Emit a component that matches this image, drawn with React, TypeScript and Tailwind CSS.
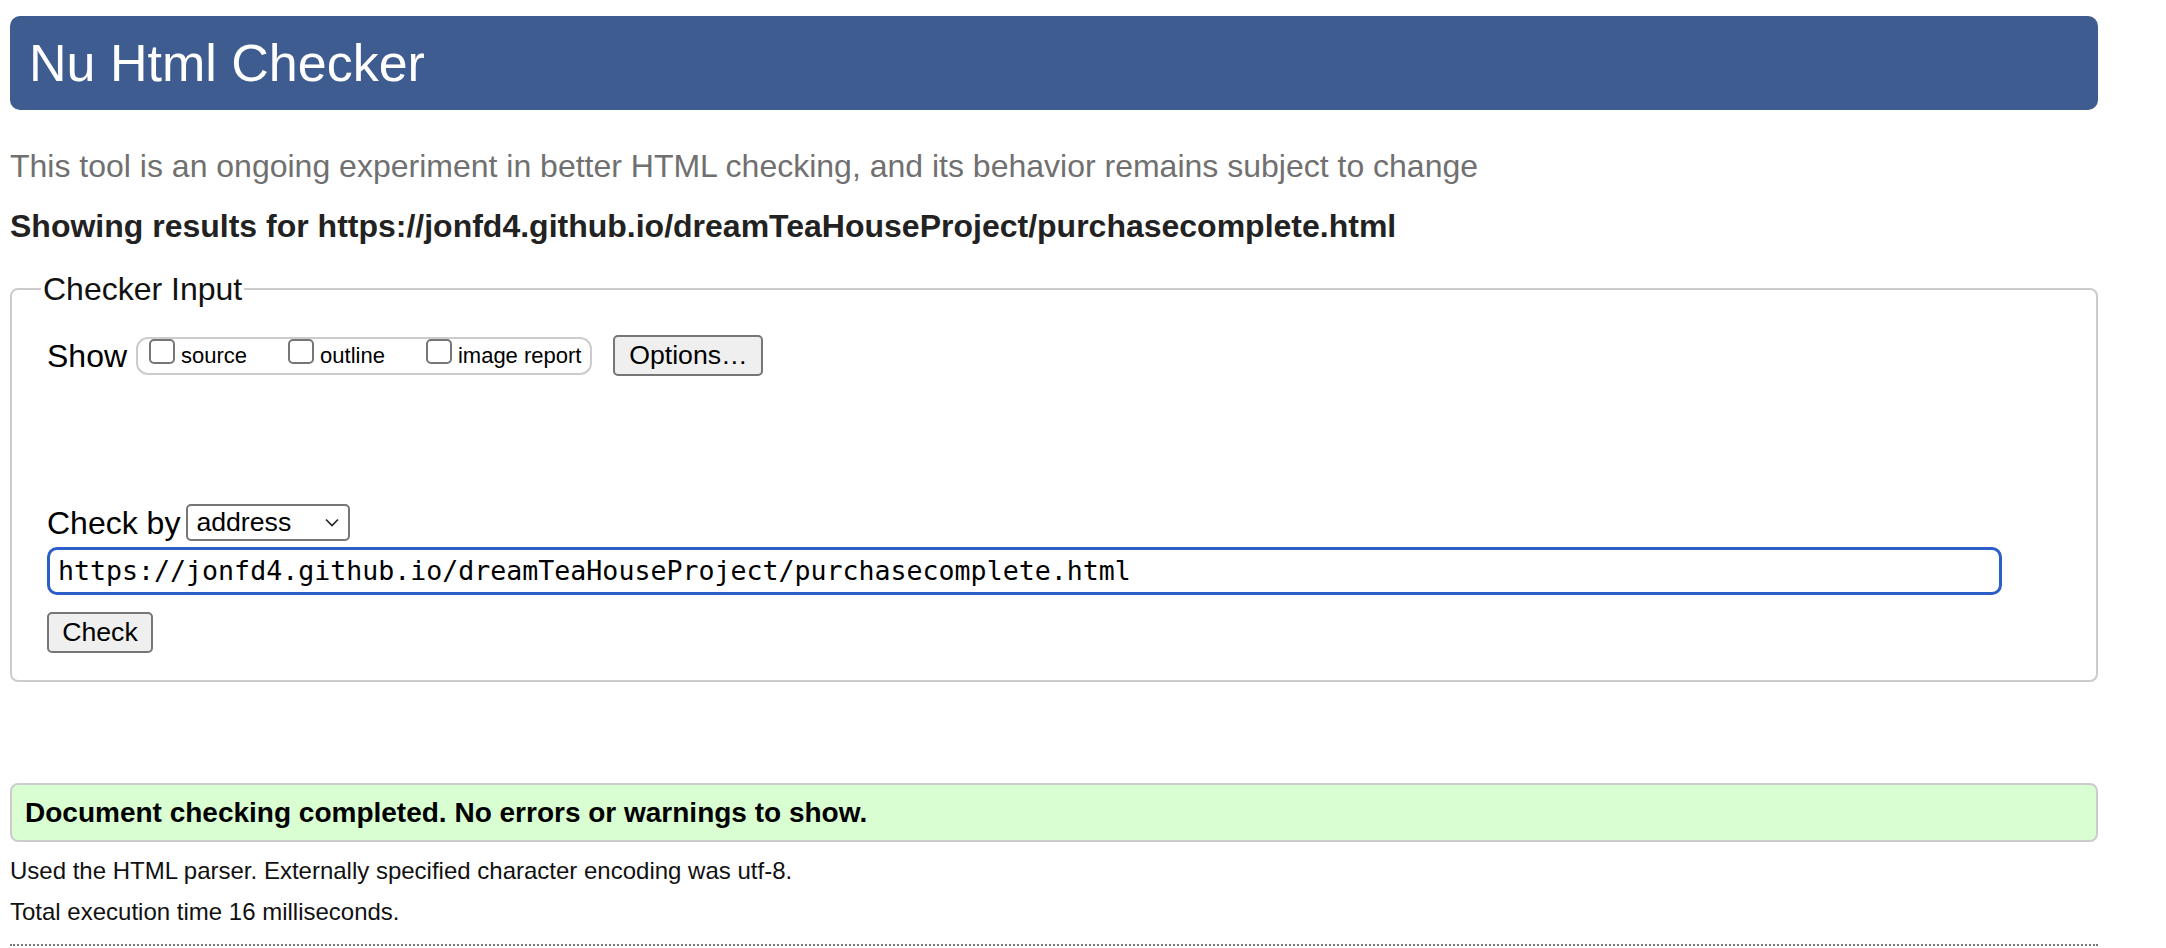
import React from "react";

const sans = "font-['Liberation_Sans',Arial,sans-serif]";

const Checkbox = ({ label }: { label: string }) => (
  <label className="flex items-center">
    <input
      type="checkbox"
      className="appearance-none w-[26px] h-[25px] mb-[9px] border-2 border-[#767676] rounded-[5px] bg-white"
    />
    <span className="ml-[6px] text-[22px] leading-[28px] text-black">{label}</span>
  </label>
);

const Button = ({ children, className }: { children: React.ReactNode; className?: string }) => (
  <button
    className={
      "h-[41px] border-2 border-[#767676] rounded-[5px] bg-[#efefef] text-[26.67px] leading-none text-black " +
      (className ?? "")
    }
  >
    {children}
  </button>
);

export default function App() {
  return (
    <div className={`${sans} min-h-screen bg-white text-black`}>
      <div className="ml-[10px] w-[2088px]">
        {/* title bar */}
        <div className="mt-[16px] h-[94px] rounded-[10px] bg-[#3e5c8f] flex items-center pl-[19px]">
          <h1 className="text-[52px] leading-none text-white">Nu Html Checker</h1>
        </div>

        <p className="mt-[36px] text-[32px] leading-[40px] text-[#707070]">
          This tool is an ongoing experiment in better HTML checking, and its behavior remains subject to change
        </p>
        <p className="mt-[20px] text-[32px] leading-[40px] font-bold text-[#222]">
          Showing results for https://jonfd4.github.io/dreamTeaHouseProject/purchasecomplete.html
        </p>

        {/* input form */}
        <fieldset className="mt-[25px] border-2 border-[#cccccc] rounded-[8px] pl-[29px] pb-[27px]">
          <legend className="px-[2px] text-[32px] leading-[36px] text-[#111]">Checker Input</legend>
          <div className="pl-[6px]">
            <div className="mt-[28px] flex items-center h-[41px]">
              <span className="text-[32px] leading-[40px]">Show</span>
              <div className="ml-[9px] h-[38px] flex items-center gap-[41px] border-2 border-[#cccccc] rounded-[12px] pl-[11px] pr-[9px]">
                <Checkbox label="source" />
                <Checkbox label="outline" />
                <Checkbox label="image report" />
              </div>
              <Button className="ml-[21px] w-[150px]">Options…</Button>
            </div>

            <div className="mt-[128px] flex items-center h-[37px]">
              <span className="text-[32px] leading-[40px]">Check by</span>
              <div className="ml-[6px] w-[164px] h-[37px] border-2 border-[#767676] rounded-[5px] bg-white flex items-center justify-between pl-[8px] pr-[9px]">
                <span className="text-[26.67px] leading-none">address</span>
                <svg width="14" height="9" viewBox="0 0 14 9" fill="none">
                  <path d="M1 1.5 L7 7.5 L13 1.5" stroke="#222" strokeWidth="1.6" />
                </svg>
              </div>
            </div>

            <div className="mt-[6px] w-[1955px] h-[48px] border-[3px] border-[#2b5fc7] rounded-[10px] flex items-center pl-[8px]">
              <span className="font-['DejaVu_Sans_Mono','Liberation_Mono',monospace] text-[26.6px] leading-none text-black">
                https://jonfd4.github.io/dreamTeaHouseProject/purchasecomplete.html
              </span>
            </div>

            <Button className="mt-[17px] w-[106px]">Check</Button>
          </div>
        </fieldset>

        {/* result */}
        <div className="mt-[101px] h-[59px] border-2 border-[#cccccc] rounded-[8px] bg-[#d8fed2] flex items-center pl-[13px]">
          <p className="text-[28px] leading-none font-bold text-black">
            Document checking completed. No errors or warnings to show.
          </p>
        </div>

        <p className="mt-[13px] text-[24px] leading-[32px] text-[#111]">
          Used the HTML parser. Externally specified character encoding was utf-8.
        </p>
        <p className="mt-[9px] text-[24px] leading-[32px] text-[#111]">Total execution time 16 milliseconds.</p>

        <div className="mt-[16px] border-t-2 border-dotted border-[#777]" />
      </div>
    </div>
  );
}
